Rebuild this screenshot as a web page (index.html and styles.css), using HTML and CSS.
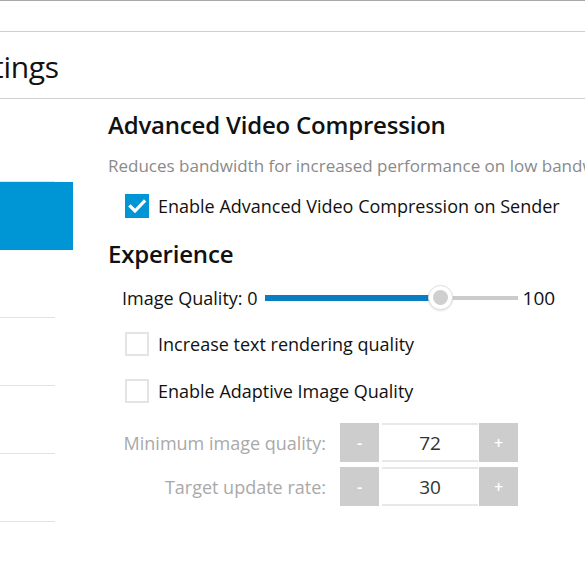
FILE: index.html
```html
<!DOCTYPE html>
<html>
<head>
<meta charset="utf-8">
<link rel="stylesheet" href="styles.css">
</head>
<body>
<div class="app">
  <div class="topbar"></div>
  <div class="titlebar"><h1 class="title">Settings</h1></div>
  <div class="main">
    <nav class="sidebar">
      <div class="nav-item"></div>
      <div class="nav-item active"></div>
      <div class="nav-item"></div>
      <div class="nav-item"></div>
      <div class="nav-item"></div>
      <div class="nav-item"></div>
      <div class="nav-item"></div>
    </nav>
    <section class="content">
      <h2 class="section-title">Advanced Video Compression</h2>
      <p class="desc">Reduces bandwidth for increased performance on low bandwidth networks</p>
      <label class="check-row">
        <span class="box checked">
          <svg width="24" height="24" viewBox="0 0 24 24"><path d="M5.5 12.5 L10 17 L19 7.5" fill="none" stroke="#fff" stroke-width="3.2" stroke-linecap="square"/></svg>
        </span>
        <span class="check-label">Enable Advanced Video Compression on Sender</span>
      </label>
      <h2 class="section-title exp">Experience</h2>
      <div class="slider-row">
        <span class="slider-label">Image Quality: 0</span>
        <div class="slider">
          <div class="track"></div>
          <div class="fill" style="width:175px"></div>
          <div class="thumb" style="left:163px"><div class="thumb-inner"></div></div>
        </div>
        <span class="slider-max">100</span>
      </div>
      <label class="check-row plain">
        <span class="box"></span>
        <span class="check-label">Increase text rendering quality</span>
      </label>
      <label class="check-row plain second">
        <span class="box"></span>
        <span class="check-label">Enable Adaptive Image Quality</span>
      </label>
      <div class="spin-grid">
        <span class="spin-label">Minimum image quality:</span>
        <div class="spinner">
          <span class="spin-btn">-</span>
          <span class="spin-value">72</span>
          <span class="spin-btn">+</span>
        </div>
        <span class="spin-label">Target update rate:</span>
        <div class="spinner">
          <span class="spin-btn">-</span>
          <span class="spin-value">30</span>
          <span class="spin-btn">+</span>
        </div>
      </div>
    </section>
  </div>
</div>
</body>
</html>
```

FILE: styles.css
```css
html, body {
  margin: 0;
  padding: 0;
  background: #fff;
  overflow: hidden;
}
body {
  font-family: "Open Sans", "Noto Sans", sans-serif;
  color: #111;
  width: 585px;
  height: 585px;
}
.app {
  width: 585px;
  height: 585px;
  overflow: hidden;
}
.topbar {
  border-top: 1px solid #a8a8a8;
  box-sizing: border-box;
  border-bottom: 1px solid #cfcfcf;
  height: 32px;
}
.titlebar {
  height: 67px;
  box-sizing: border-box;
  border-bottom: 1px solid #d0d0d0;
  display: flex;
  align-items: center;
  overflow: hidden;
}
.title {
  margin: 2px 0 0 -50px;
  font-size: 30px;
  font-weight: 400;
  white-space: nowrap;
  color: #111;
  letter-spacing: -0.3px;
}
.main {
  display: flex;
}
.sidebar {
  width: 73px;
  flex: none;
  padding-top: 15px;
}
.nav-item {
  height: 68px;
  box-sizing: border-box;
  position: relative;
}
.nav-item::after {
  content: "";
  display: block;
  position: absolute;
  left: 0;
  bottom: 0;
  width: 55px;
  height: 1px;
  background: #e3e3e3;
}
.nav-item.active {
  background: #0096d6;
}
.nav-item.active::after {
  display: none;
}
.content {
  margin-left: 35px;
  flex: none;
  width: 500px;
  white-space: nowrap;
}
.section-title {
  margin: 0;
  font-size: 24px;
  font-weight: 600;
  line-height: 32px;
  margin-top: 10px;
  letter-spacing: -0.2px;
}
.section-title.exp {
  margin-top: 19px;
}
.desc {
  margin: 14px 0 0;
  font-size: 17px;
  line-height: 22px;
  color: #8a8a8a;
}
.check-row {
  display: flex;
  align-items: center;
  margin-left: 17px;
  margin-top: 16px;
  height: 26px;
}
.box {
  width: 24px;
  height: 24px;
  box-sizing: border-box;
  border: 2px solid #e4e4e4;
  background: #fff;
  flex: none;
  display: flex;
}
.box.checked {
  border: none;
  background: #0096d6;
}
.check-label {
  margin-left: 9px;
  font-size: 18px;
  color: #111;
}
.check-row.plain {
  margin-top: 20px;
}
.check-row.second {
  margin-top: 21px;
}
.slider-row {
  display: flex;
  align-items: center;
  margin-left: 14px;
  margin-top: 15px;
  height: 26px;
}
.slider-label, .slider-max {
  font-size: 18px;
}
.slider-max {
  font-size: 19px;
}
.slider {
  position: relative;
  width: 253px;
  height: 26px;
  margin: 0 5px 0 7px;
}
.track {
  position: absolute;
  left: 0;
  right: 0;
  top: 11px;
  height: 4px;
  background: #cccccc;
}
.fill {
  position: absolute;
  left: 0;
  top: 10px;
  height: 6px;
  background: #0a7cc1;
}
.thumb {
  position: absolute;
  top: 0;
  width: 25px;
  height: 25px;
  border-radius: 50%;
  background: #fff;
  border: 1px solid #e0e0e0;
  box-sizing: border-box;
  box-shadow: 0 1px 2px rgba(0,0,0,0.12);
  display: flex;
  align-items: center;
  justify-content: center;
}
.thumb-inner {
  width: 15px;
  height: 15px;
  border-radius: 50%;
  background: #cfcfcf;
}
.spin-grid {
  display: grid;
  grid-template-columns: 218px auto;
  column-gap: 14px;
  row-gap: 5px;
  margin-top: 19px;
  align-items: center;
}
.spin-label {
  text-align: right;
  font-size: 18px;
  color: #a9a9a9;
}
.spinner {
  display: flex;
  height: 39px;
  width: 178px;
}
.spin-btn {
  width: 39px;
  background: #cdcdcd;
  color: #fff;
  display: flex;
  align-items: center;
  justify-content: center;
  font-size: 16px;
  font-weight: 600;
}
.spin-value {
  flex: 1;
  margin: 0 1px 0 3px;
  border-top: 2px solid #e8e8e8;
  border-bottom: 2px solid #e8e8e8;
  box-sizing: border-box;
  display: flex;
  align-items: center;
  justify-content: center;
  font-size: 19px;
  color: #333;
}
```
